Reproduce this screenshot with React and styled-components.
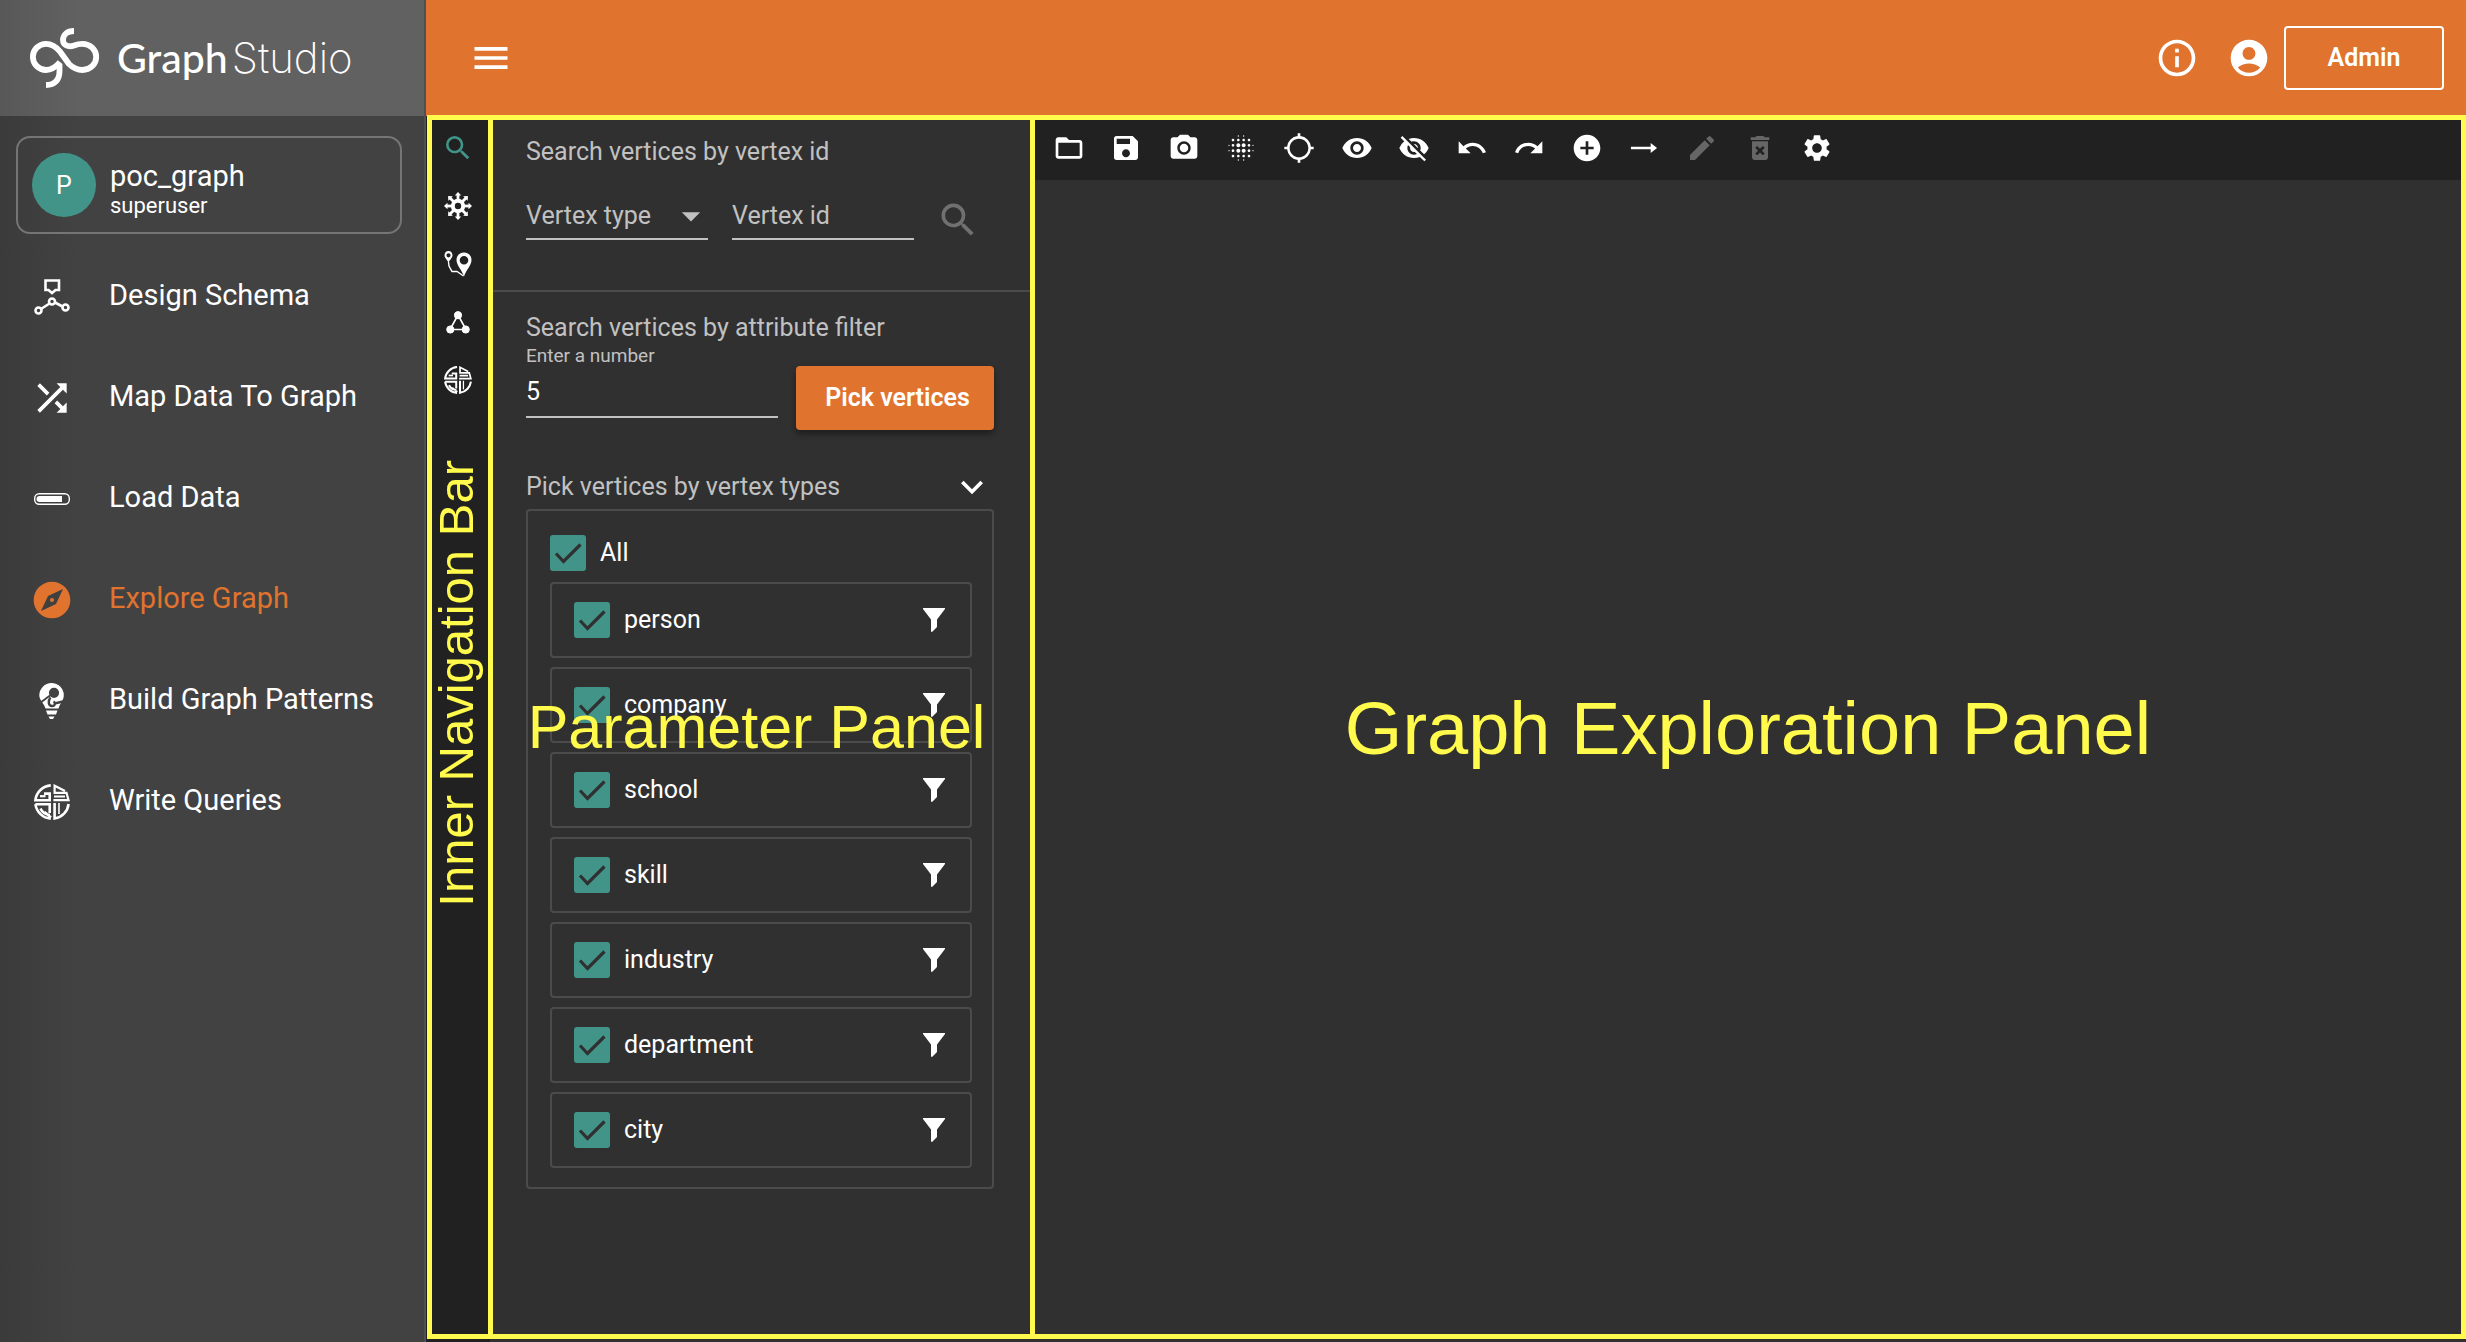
import React, { useState } from "react";
import styled, { createGlobalStyle } from "styled-components";
import {
  MdAccountCircle,
  MdAddCircle,
  MdArrowDropDown,
  MdBlurOn,
  MdDeleteForever,
  MdEdit,
  MdExpandMore,
  MdExplore,
  MdFolderOpen,
  MdInfoOutline,
  MdLocationSearching,
  MdMenu,
  MdPhotoCamera,
  MdRedo,
  MdSave,
  MdSearch,
  MdSettings,
  MdShuffle,
  MdUndo,
  MdVisibility,
  MdVisibilityOff,
} from "react-icons/md";

const color = {
  accent: "#e0732e",
  teal: "#429488",
  sidebar: "#424242",
  brand: "#616161",
  panel: "#303030",
  bar: "#212121",
  line: "#4b4b4b",
  muted: "#c1c1c1",
  mark: "#fffa4b",
};

const GlobalStyle = createGlobalStyle`
  *, *::before, *::after { box-sizing: border-box; }
  body {
    margin: 0;
    background: ${color.panel};
    color: #fff;
    font-family: Roboto, "Liberation Sans", sans-serif;
    font-size: 25px;
  }
  button, input, select { font: inherit; color: inherit; }
`;

const Page = styled.div`
  display: grid;
  grid-template-columns: 426px minmax(0, 1fr);
  min-height: 100vh;
`;

const Sidebar = styled.aside`
  display: flex;
  flex-direction: column;
  border-right: 2px solid #505050;
  background: linear-gradient(to right, #3b3b3b, ${color.sidebar} 80px);
`;

const Brand = styled.div`
  display: flex;
  align-items: center;
  gap: 17px;
  height: 116px;
  padding-left: 30px;
  background: linear-gradient(to right, #585858, ${color.brand} 80px);
`;

const BrandName = styled.span`
  font-family: Lato, sans-serif;
  font-size: 41px;
  line-height: 48px;
  font-weight: 500;
`;

const BrandThin = styled.span`
  margin-left: 4px;
  font-family: Inter, Lato, sans-serif;
  font-size: 42px;
  font-weight: 200;
`;

const GraphCard = styled.button`
  display: flex;
  align-items: center;
  gap: 14px;
  height: 98px;
  margin: 20px 22px 12px 16px;
  padding: 0 14px;
  border: 2px solid #757575;
  border-radius: 14px;
  background: transparent;
  text-align: left;
`;

const Avatar = styled.span`
  display: grid;
  place-items: center;
  width: 64px;
  height: 64px;
  border-radius: 50%;
  background: ${color.teal};
`;

const CardText = styled.span`
  padding-top: 10px;
`;

const GraphName = styled.span`
  display: block;
  font-size: 29px;
  line-height: 32px;
`;

const RoleName = styled.span`
  display: block;
  font-size: 22px;
  line-height: 28px;
`;

const Menu = styled.nav`
  display: flex;
  flex-direction: column;
`;

const MenuLink = styled.a`
  display: grid;
  grid-template-columns: 44px 1fr;
  align-items: center;
  gap: 35px;
  height: 101px;
  padding-left: 30px;
  color: ${(p) => (p.$active ? color.accent : "#fff")};
  font-size: 29px;
  line-height: 36px;
  text-decoration: none;

  svg { justify-self: center; }
`;

const MenuLabel = styled.span`
  padding-bottom: 4px;
`;

const Main = styled.div`
  display: flex;
  flex-direction: column;
`;

const Header = styled.header`
  display: flex;
  align-items: center;
  height: 116px;
  padding: 0 22px 0 43px;
  background: ${color.accent};
`;

const HeaderActions = styled.div`
  display: flex;
  align-items: center;
  gap: 28px;
  margin-left: auto;
  margin-right: 13px;
`;

const IconButton = styled.button`
  display: grid;
  place-items: center;
  padding: 0;
  border: 0;
  background: none;
  color: ${(p) => p.$tone || "#fff"};
`;

const AdminButton = styled.button`
  width: 160px;
  height: 64px;
  padding: 0 0 2px;
  border: 2px solid #fff;
  border-radius: 4px;
  background: transparent;
  font-weight: 600;
`;

const Workspace = styled.div`
  position: relative;
  flex: 1;
  display: grid;
  grid-template-columns: 64px 543px minmax(0, 1fr);
`;

const Rail = styled.nav`
  display: flex;
  flex-direction: column;
  background: ${color.bar};
  padding-top: 3px;
`;

const RailButton = styled(IconButton)`
  height: 58px;
`;

const Panel = styled.section`
  display: flex;
  flex-direction: column;
  background: ${color.panel};
`;

const SearchBlock = styled.div`
  height: 176px;
  padding: 20px 36px 0;
  border-bottom: 2px solid ${color.line};
`;

const FilterBlock = styled.div`
  padding: 20px 39px 0 36px;
`;

const Title = styled.h2`
  margin: 0;
  color: ${color.muted};
  font-size: 25px;
  line-height: 32px;
  font-weight: 400;
`;

const SearchRow = styled.div`
  display: grid;
  grid-template-columns: 182px 182px 42px;
  gap: 24px;
  margin-top: 24px;
`;

const Field = styled.div`
  display: flex;
  align-items: center;
  height: 48px;
  padding-top: 2px;
  border-bottom: 2px solid ${color.muted};
  color: ${color.muted};
`;

const SearchButton = styled(IconButton)`
  justify-content: end;
  padding-top: 6px;
`;

const SelectArrow = styled(MdArrowDropDown)`
  flex: none;
  margin: 0 -5px 0 -39px;
  pointer-events: none;
`;

const PlainSelect = styled.select`
  appearance: none;
  width: 100%;
  padding: 0;
  border: 0;
  background: transparent;
  line-height: 32px;
`;

const PlainInput = styled.input`
  appearance: textfield;
  width: 100%;
  padding: 0;
  border: 0;
  outline: 0;
  background: transparent;
  line-height: 32px;

  &::placeholder { color: ${color.muted}; opacity: 1; }
  &::-webkit-inner-spin-button { appearance: none; }
`;

const PickRow = styled.div`
  display: grid;
  grid-template-columns: 252px 198px;
  gap: 18px;
  align-items: end;
`;

const NumberField = styled.div`
  display: flex;
  flex-direction: column;
  height: 74px;
  margin-bottom: 12px;
  border-bottom: 2px solid ${color.muted};
`;

const SmallLabel = styled.label`
  margin-bottom: 8px;
  color: ${color.muted};
  font-size: 19px;
  line-height: 24px;
`;

const PickButton = styled.button`
  height: 64px;
  padding: 0 0 2px 5px;
  border: 0;
  border-radius: 4px;
  background: ${color.accent};
  box-shadow: 0 4px 6px rgba(0, 0, 0, 0.4);
  font-weight: 600;
`;

const TypesHead = styled.div`
  display: flex;
  align-items: center;
  justify-content: space-between;
  height: 44px;
  margin-top: 35px;
`;

const TypesBox = styled.div`
  display: flex;
  flex-direction: column;
  gap: 11px;
  padding: 24px 20px 19px 22px;
  border: 2px solid ${color.line};
  border-radius: 4px;
`;

const CheckLabel = styled.label`
  display: flex;
  align-items: center;
  gap: 14px;
  height: 36px;
  line-height: 36px;
`;

const Tick = styled.span`
  display: grid;
  width: 36px;
  height: 36px;

  > * { grid-area: 1 / 1; }
  svg { pointer-events: none; }
`;

const TickInput = styled.input`
  appearance: none;
  width: 36px;
  height: 36px;
  margin: 0;
  border: 3px solid ${color.teal};
  border-radius: 3px;

  &:checked { background: ${color.teal}; }
`;

const TypeRow = styled.div`
  display: flex;
  align-items: center;
  justify-content: space-between;
  height: 76px;
  padding: 0 25px 0 22px;
  border: 2px solid ${color.line};
  border-radius: 4px;
`;

const TypeList = styled.div`
  display: flex;
  flex-direction: column;
  gap: 9px;
`;

const Canvas = styled.section`
  background: ${color.panel};
`;

const Toolbar = styled.div`
  height: 64px;
  padding-left: 7px;
  background: ${color.bar};
`;

const Tools = styled.div`
  display: grid;
  grid-template-columns: repeat(14, 1fr);
  align-items: center;
  width: 806px;
  height: 64px;
`;

/* Callouts drawn over the workspace to name its three areas. */
const Callouts = styled.div`
  position: absolute;
  inset: -1px 0 3px 1px;
  display: grid;
  grid-template-columns: 61px 542px minmax(0, 1fr);
  border-right: 5px solid ${color.mark};
  pointer-events: none;
`;

const Callout = styled.div`
  display: grid;
  place-items: center;
  border: 5px solid ${color.mark};
  border-right: 0;
  color: ${color.mark};
  font-family: "Liberation Sans", Arial, sans-serif;
  font-size: ${(p) => p.$size}px;
  line-height: 1;
  white-space: nowrap;
`;

const RailCallout = styled(Callout)`
  padding: 0 8px 88px 0;

  span {
    writing-mode: vertical-rl;
    transform: rotate(180deg);
  }
`;

const PanelCallout = styled(Callout)`
  padding-right: 10px;
`;

const CanvasCallout = styled(Callout)`
  padding-top: 4px;
`;

const Logo = () => (
  <svg width="70" height="62" viewBox="30 27 70 62" fill="none" stroke="#fff" strokeWidth="5.8">
    <path d="M74 31C67 31 63 35 63 40C63 45 68 47.500 74 45.500C76.500 44.500 79 43.800 82.500 43.800A13.700 13.100 0 0 1 82.500 70C76 70 72.500 67.500 69 64L60 51.500C56 46.500 52 43.800 46 43.800A13.100 13.100 0 0 0 46 70C51 70 55 68 60 62" />
    <path d="M59.500 64V71C59.500 80 55 85 46 85" />
  </svg>
);

const SchemaIcon = () => (
  <svg width="36" height="36" viewBox="0 0 36 36" fill="none" stroke="currentColor" strokeWidth="2.6">
    <path d="M11.500 1.500H25V11H21.500L18 14L14.500 11H11.500Z" />
    <circle cx="18" cy="22.500" r="3" />
    <circle cx="4.500" cy="31.500" r="3" />
    <circle cx="31.500" cy="28.500" r="3" />
    <path d="M7 30L15.500 24.500M21 23.500L28.500 27.500" />
  </svg>
);

const LoadIcon = () => (
  <svg width="36" height="12" viewBox="0 0 36 12" fill="none" stroke="currentColor" strokeWidth="1.4">
    <rect x="0.700" y="0.700" width="34.600" height="10.600" rx="4.500" />
    <path d="M5.500 3H28V9H5.500A3 3 0 0 1 5.500 3Z" fill="currentColor" stroke="none" />
  </svg>
);

const PatternIcon = () => (
  <svg width="26" height="36" viewBox="0 0 26 36" fill="currentColor">
    <path d="M12.500 0A12.300 12.300 0 0 1 24.800 12.300C24.800 17 21.500 19.500 19.500 25.500H6.500C4.500 19.500 .3 17 .3 12.300A12.300 12.300 0 0 1 12.500 0Z" />
    <path d="M7 27.500H18.500L17 31.500H8.500ZM9.500 33.500H15.500L14 36H11Z" />
    <g stroke={color.sidebar} fill="none" strokeWidth="1.800">
      <circle cx="15" cy="9.800" r="4.200" fill={color.sidebar} />
      <path d="M1 20L11 12.500" />
      <path d="M11.500 14.500C8.500 18 9.500 23 13 23C16.500 23 16.500 19.500 14.500 18.500M15.500 20.500L24 18.500" strokeWidth="2.400" />
    </g>
  </svg>
);

const QueryIcon = ({ size }) => (
  <svg width={size} height={size} viewBox="0 0 36 36" fill="none" stroke="currentColor" strokeWidth="2.600">
    <path d="M16.800 1.400A16.600 16.600 0 0 0 1.400 16.200H15.700V9.600H10" />
    <path d="M6 12.200H11.500" strokeWidth="2.200" />
    <path d="M31 7L20.600 1.700V8.800H32.500L34.500 16.200H19.400M20 12.500H31" strokeWidth="2.200" />
    <path d="M1.400 20.200H15.700V29M1.400 20.200A16.600 16.600 0 0 0 16.800 34.600M6.500 24.500C8 28 11 30.500 16 31M10.500 28L17 33.500" />
    <path d="M20.600 19V34.500A16.600 16.600 0 0 0 34.600 20" />
    <path d="M25 19V30" strokeWidth="1.600" />
  </svg>
);

const HubIcon = () => (
  <svg width="28" height="28" viewBox="-14 -14 28 28" fill="none" stroke="#fff">
    <circle r="5.200" strokeWidth="4" />
    {[0, 45, 90, 135, 180, 225, 270, 315].map((a) => (
      <g key={a} transform={`rotate(${a})`}>
        <path d="M0 -5V-12" strokeWidth="2.800" />
        <path d="M-3.200 -10.500L0 -14L3.200 -10.500Z" fill="#fff" stroke="none" />
      </g>
    ))}
  </svg>
);

const RouteIcon = () => (
  <svg width="28" height="26" viewBox="0 0 28 26" fill="#fff">
    <path fillRule="evenodd" d="M20 1.500C24.500 1.500 27.500 4.800 27.500 9C27.500 14.500 22 19 20 25.500C18 19 12.500 14.500 12.500 9C12.500 4.800 15.500 1.500 20 1.500ZM20 5A4.300 4.300 0 1 0 20 13.600A4.300 4.300 0 1 0 20 5Z" />
    <path fillRule="evenodd" d="M4.500 0C7 0 8.500 2 8.500 4.300C8.500 7 5.500 9 4.500 12C3.500 9 .5 7 .5 4.300C.5 2 2 0 4.500 0ZM4.500 2.200A2.100 2.100 0 1 0 4.500 6.400A2.100 2.100 0 1 0 4.500 2.200Z" />
    <path d="M4.500 11L5 15L8 20.500H13L19.500 25" fill="none" stroke="#fff" strokeWidth="1.400" />
  </svg>
);

const TriangleIcon = () => (
  <svg width="24" height="23" viewBox="0 0 24 23" fill="#fff" stroke="#fff">
    <path d="M12 4L4 18.500H20Z" fill="none" strokeWidth="1.600" />
    <circle cx="12" cy="4.200" r="3.600" />
    <circle cx="4.300" cy="18.500" r="3.600" />
    <circle cx="19.700" cy="18.500" r="3.600" />
  </svg>
);

const LongArrowIcon = () => (
  <svg width="32" height="32" viewBox="0 0 24 24" fill="currentColor">
    <path d="M2.200 11H17V8.200L21.800 12L17 15.800V13H2.200Z" />
  </svg>
);

const FunnelIcon = () => (
  <svg width="22" height="24" viewBox="0 0 22 24" fill="currentColor">
    <path d="M0 0H22V1L14 11.500V19L9 24L8 23.500V11.500L0 1Z" />
  </svg>
);

const MENU = [
  ["Design Schema", <SchemaIcon />],
  ["Map Data To Graph", <MdShuffle size={44} />],
  ["Load Data", <LoadIcon />],
  ["Explore Graph", <MdExplore size={44} />],
  ["Build Graph Patterns", <PatternIcon />],
  ["Write Queries", <QueryIcon size={36} />],
];

const RAIL = [
  ["Search vertices", <MdSearch size={32} />],
  ["Expand from vertices", <HubIcon />],
  ["Find paths", <RouteIcon />],
  ["Find connections", <TriangleIcon />],
  ["Run query", <QueryIcon size={28} />],
];

const TOOLS = [
  ["Open", MdFolderOpen],
  ["Save", MdSave],
  ["Screenshot", MdPhotoCamera],
  ["Layout", MdBlurOn],
  ["Locate", MdLocationSearching],
  ["Show", MdVisibility],
  ["Hide", MdVisibilityOff],
  ["Undo", MdUndo],
  ["Redo", MdRedo],
  ["Add vertex", MdAddCircle],
  ["Add edge", LongArrowIcon],
  ["Edit", MdEdit, true],
  ["Delete", MdDeleteForever, true],
  ["Settings", MdSettings],
];

const TYPES = ["person", "company", "school", "skill", "industry", "department", "city"];

function Checkbox({ label, checked, onChange }) {
  return (
    <CheckLabel>
      <Tick>
        <TickInput type="checkbox" checked={checked} onChange={onChange} />
        <svg width="36" height="36" viewBox="0 0 36 36" fill="none" stroke={color.panel} strokeWidth="3.200">
          <path d="M6 18.500L13.500 26.500L30.500 9.500" />
        </svg>
      </Tick>
      {label}
    </CheckLabel>
  );
}

export default function App() {
  const [picked, setPicked] = useState(TYPES);
  const [amount, setAmount] = useState("5");
  const all = picked.length === TYPES.length;
  const toggle = (t) =>
    setPicked(picked.includes(t) ? picked.filter((x) => x !== t) : [...picked, t]);

  return (
    <>
      <GlobalStyle />
      <Page>
        <Sidebar>
          <Brand>
            <Logo />
            <BrandName>
              Graph<BrandThin>Studio</BrandThin>
            </BrandName>
          </Brand>
          <GraphCard type="button">
            <Avatar>P</Avatar>
            <CardText>
              <GraphName>poc_graph</GraphName>
              <RoleName>superuser</RoleName>
            </CardText>
          </GraphCard>
          <Menu>
            {MENU.map(([name, icon]) => (
              <MenuLink key={name} href="#" $active={name === "Explore Graph"}>
                {icon}
                <MenuLabel>{name}</MenuLabel>
              </MenuLink>
            ))}
          </Menu>
        </Sidebar>

        <Main>
          <Header>
            <IconButton type="button" aria-label="Menu">
              <MdMenu size={44} />
            </IconButton>
            <HeaderActions>
              <IconButton type="button" aria-label="Information">
                <MdInfoOutline size={44} />
              </IconButton>
              <IconButton type="button" aria-label="Account">
                <MdAccountCircle size={44} />
              </IconButton>
            </HeaderActions>
            <AdminButton type="button">Admin</AdminButton>
          </Header>

          <Workspace>
            <Rail>
              {RAIL.map(([name, icon], i) => (
                <RailButton key={name} type="button" aria-label={name} $tone={i === 0 ? color.teal : "#fff"}>
                  {icon}
                </RailButton>
              ))}
            </Rail>

            <Panel>
              <SearchBlock>
                <Title>Search vertices by vertex id</Title>
                <SearchRow>
                  <Field>
                    <PlainSelect aria-label="Vertex type" defaultValue="">
                      <option value="">Vertex type</option>
                      {TYPES.map((t) => (
                        <option key={t}>{t}</option>
                      ))}
                    </PlainSelect>
                    <SelectArrow size={44} />
                  </Field>
                  <Field>
                    <PlainInput aria-label="Vertex id" placeholder="Vertex id" />
                  </Field>
                  <SearchButton type="button" aria-label="Search" $tone="#707070">
                    <MdSearch size={44} />
                  </SearchButton>
                </SearchRow>
              </SearchBlock>

              <FilterBlock>
                <Title>Search vertices by attribute filter</Title>
                <PickRow>
                  <NumberField>
                    <SmallLabel htmlFor="amount">Enter a number</SmallLabel>
                    <PlainInput
                      id="amount"
                      type="number"
                      value={amount}
                      onChange={(e) => setAmount(e.target.value)}
                    />
                  </NumberField>
                  <PickButton type="button">Pick vertices</PickButton>
                </PickRow>
                <TypesHead>
                  <Title>Pick vertices by vertex types</Title>
                  <IconButton type="button" aria-label="Collapse">
                    <MdExpandMore size={44} />
                  </IconButton>
                </TypesHead>
                <TypesBox>
                  <Checkbox label="All" checked={all} onChange={() => setPicked(all ? [] : TYPES)} />
                  <TypeList>
                    {TYPES.map((t) => (
                      <TypeRow key={t}>
                        <Checkbox label={t} checked={picked.includes(t)} onChange={() => toggle(t)} />
                        <IconButton type="button" aria-label={`Filter ${t}`}>
                          <FunnelIcon />
                        </IconButton>
                      </TypeRow>
                    ))}
                  </TypeList>
                </TypesBox>
              </FilterBlock>
            </Panel>

            <Canvas>
              <Toolbar>
                <Tools>
                  {TOOLS.map(([name, Icon, off]) => (
                    <IconButton key={name} type="button" aria-label={name} disabled={off} $tone={off ? "#666" : "#fff"}>
                      <Icon size={32} />
                    </IconButton>
                  ))}
                </Tools>
              </Toolbar>
            </Canvas>

            <Callouts>
              <RailCallout $size={49}>
                <span>Inner Navigation Bar</span>
              </RailCallout>
              <PanelCallout $size={61}>Parameter Panel</PanelCallout>
              <CanvasCallout $size={74}>Graph Exploration Panel</CanvasCallout>
            </Callouts>
          </Workspace>
        </Main>
      </Page>
    </>
  );
}
